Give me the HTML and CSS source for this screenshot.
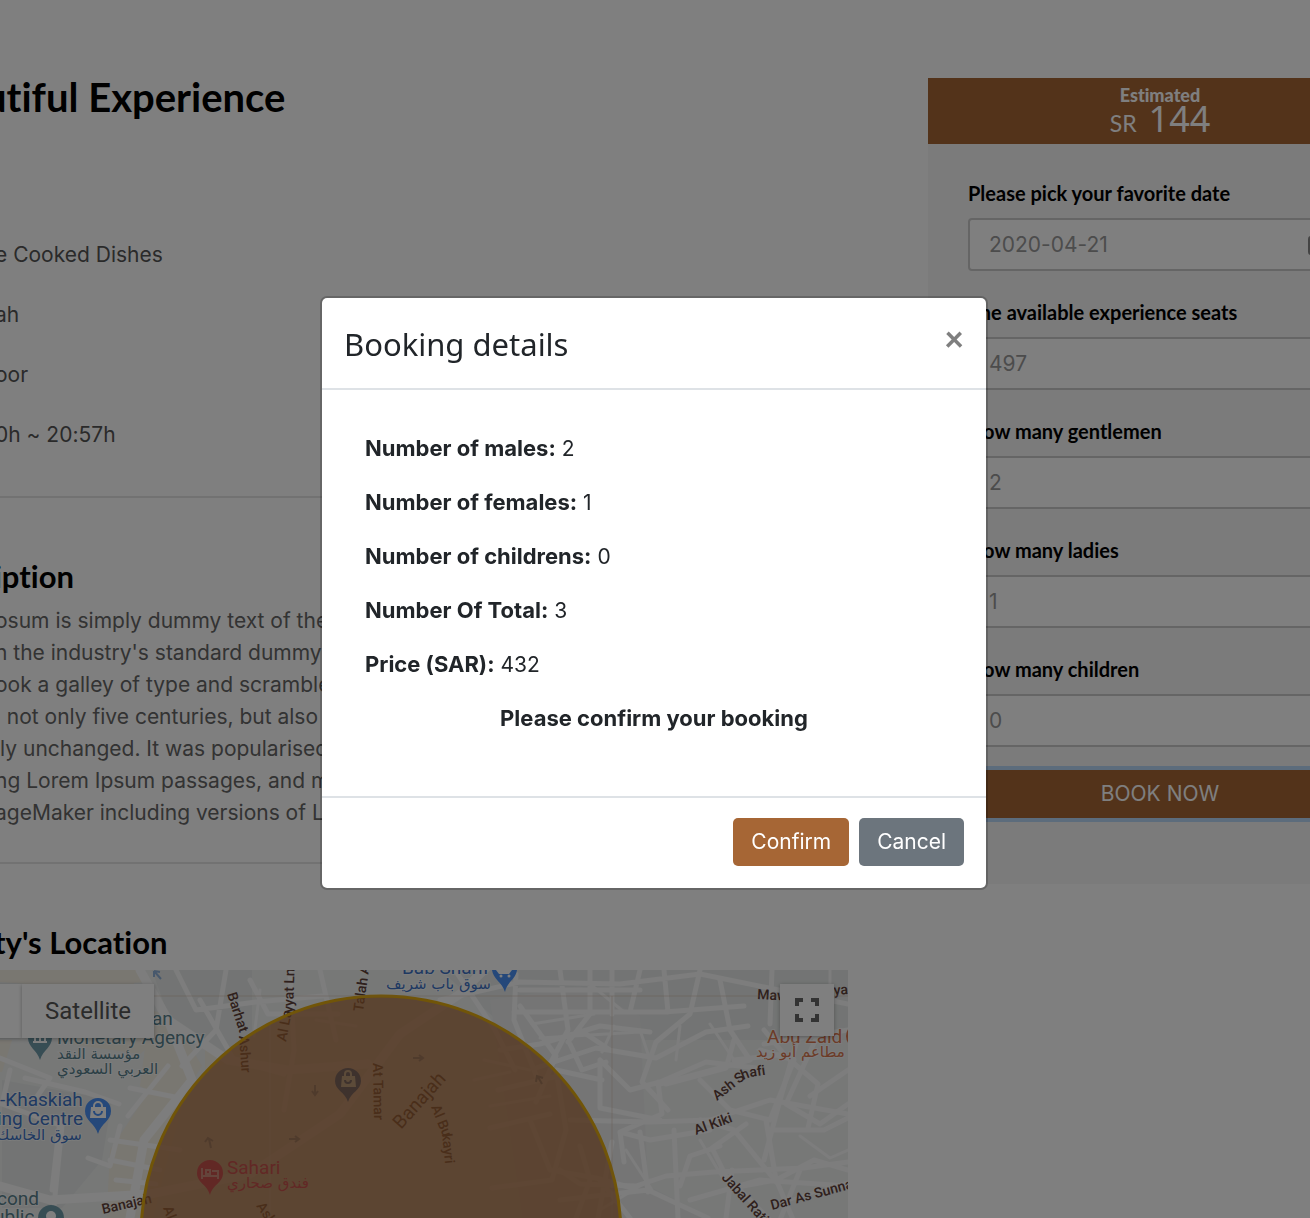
FILE: index.html
```html
<!DOCTYPE html>
<html lang="en">
<head>
<meta charset="utf-8">
<title>Booking details</title>
<link rel="stylesheet" href="styles.css">
</head>
<body>
<div class="page">
  <main class="experience">
    <h1 class="title">utiful Experience</h1>
    <ul class="facts">
      <li>e Cooked Dishes</li>
      <li>ah</li>
      <li>oor</li>
      <li>0h ~ 20:57h</li>
    </ul>
    <section class="section">
      <h2 class="heading">iption</h2>
      <p class="description">osum is simply dummy text of the<br>n the industry's standard dummy<br>ook a galley of type and scramble<br>&nbsp; not only five centuries, but also<br>lly unchanged. It was popularised<br>ng Lorem Ipsum passages, and m<br>ageMaker including versions of L</p>
    </section>
    <section class="section section-map">
      <h2 class="heading">ty's Location</h2>
      <div class="map">
        <svg class="map-canvas" width="848" height="500" viewBox="0 0 848 500" role="img" aria-label="Map">
          <rect width="848" height="500" fill="#eef0ef"/>
          <g fill="#f3eee2">
            <path d="M0 0h138l6 12-60 6-84-6zM60 18l66 4 44 36-30 26-70-10zM0 70h12L2 102H0zM150 40l22 6 30 50-26 40-36-20zM205 30l36 10 10 36-46 30zM110 180l40-60 40-10-20 70-20 80h-44zM60 2h74v12H70z"/>
          </g>
          <path fill="#e6e9e8" d="M152 0h100v60l-30 26-50-30zM2 110l110 20-10 60-40 48H2zM440 0h408v70H520z"/>
          <path fill="#eaebeb" d="M490 30l90-14 60 30 8 170 60 30-20 254H560z"/>
          <g class="roads" fill="none" stroke="#fafafa" stroke-width="5">
            <path stroke-width="9" d="M140 0l28 50 24 60-48 60-18 100M0 216l50 14 100-6 100-20 90-60 60-80 60-40 60-60 50-44M168 50l60 40 60 10 80-6"/>
            <path d="M10 100l-8 34 60 22-10 100M25 108l60 14 34 12M176 0l20 40 60-8 66-6M200 30l34 60 50 14M226 0l-10 60-34 36M290 0l4 80-10 60M320 0l16 70M250 10l18 34h70M0 88l50 20-14 20M60 150l-8 70M128 146l40-50M130 118l50 10M110 170l70 10M110 190l50 10M116 210l40 4M88 188l22 8 10-40"/>
            <path d="M455 0l40 60 20 40M440 30l80-18 100 2 80-10 148 30M520 36l36 50-20 46M516 4l-2 46 24 60M560 0l8 60-18 34M590 0v44l-22 28M612 0v44M640 0l-10 42M664 0l4 42M514 42h150l80-6M520 20h120M500 80l40-6 60-18 50 6M536 98l60-20 60 10 50-26 42-6M570 74l12 26 24-8M580 60l30 20"/>
            <path d="M700 0l-10 44-34 28-14 40 26 28M772 0l-2 54M720 10l10 50 20 30-90 24M800 60l-20 70-16 60M848 60l-84 14M764 60l20 24-50 6M734 70l-8 28-60 16"/>
            <path d="M600 90l30 30 30-8 46-20 50 6M600 90v48l60 12M658 112l4 32-42 18 4 30M550 144l-60 14M570 150l80 2 60-2 60-20 78 14M498 120l60-14M556 100l46 10M556 100l10 60-14 50-60 8M530 150l20 50 46 8 36 10M620 162l30 8 60-10M700 150l34 10 44 54 28 66"/>
            <path d="M760 80l34 10-24 60-40-10-30-30M790 90l28 24-10 44M820 60l-34 74 34 20 28-20M848 100l-38 26M766 150l10 60-44 8-20-40 34-24M770 160h54l24-12M720 176l-30 10-10 30M776 210l38-20 34 10M732 200l-6 48M580 176l10 34-14 38M612 172l-14 76M640 162l8 60M674 160l4 88M560 200l20 14 56 2 30-10 48-4 90-4 44-6M600 210l30 38M560 230l88-10 60 28M690 230l70-20 88 6M720 200l50 50M800 200l-20 50"/>
          </g>
          <g class="roads" fill="none" stroke="#fafafa" stroke-width="3">
            <path d="M532 54l62-10M540 68l100-6M484 90l46 10M474 110l36-8M490 136l60-10M590 14l34 28M614 56l-12 26M640 60l10 30M680 56l-4 34M710 54l24 36M830 0v40M800 16l10 40M600 240l50-30M626 180l26 40M700 170l24 40M800 166l30 22 18-8M790 230l58-18M150 14l-10 20M260 20l-6 46M316 50l40 6"/>
          </g>
          <g class="places">
            <g fill="#6f9aa8"><path d="M28 68a12 12 0 1 1 24 0c0 9-9 12-12 22-3-10-12-13-12-22z"/><path d="M38 248a13 13 0 0 1 26 0z"/></g>
            <path d="M33 72h14M35 65v7M40 65v7M45 65v7" stroke="#fff" stroke-width="2"/>
            <circle cx="51" cy="246" r="5" fill="#fff"/>
            <g fill="#4a90f4"><path d="M85 141a13 13 0 1 1 26 0c0 10-10 12-13 23-3-11-13-13-13-23z"/><path d="M492 0h25c-1 9-10 12-12 22-3-10-12-13-13-22z"/></g>
            <g fill="#fff"><path d="M91 137h15v11H90zM496 0h16l-3 4h-10z"/><circle cx="501" cy="6" r="1.500"/><circle cx="509" cy="6" r="1.500"/></g>
            <path d="M94 138v-2a4 4 0 0 1 8 0v2" fill="none" stroke="#fff" stroke-width="2"/>
            <path d="M94 141a4 4 0 0 0 8 0" fill="none" stroke="#4a90f4" stroke-width="2"/>
            <path d="M154 1l7 8M154 1l0 6M154 1l6 1" fill="none" stroke="#8fb0d8" stroke-width="2"/>
            <g fill="#58808c"><text x="152" y="55">an</text><text x="57" y="74">Monetary Agency</text><text class="arabic" x="57" y="89">مؤسسة النقد</text><text class="arabic" x="57" y="104">العربي السعودي</text><text x="-3" y="235">cond</text><text x="-6" y="253">ublic</text></g>
            <g fill="#3f73c4"><text x="0" y="136">-Khaskiah</text><text x="-3" y="155">ing Centre</text><text class="arabic" x="-3" y="170">سوق الخاسك</text><text x="402" y="4">Bab Sharif</text><text class="arabic" x="386" y="19">سوق باب شريف</text></g>
            <g fill="#d9764e"><text x="767" y="73">Abu Zaid</text><text class="arabic" x="756" y="87">مطاعم أبو زيد</text><circle cx="858" cy="66" r="12"/></g>
          </g>
          <g class="streets">
            <text transform="translate(227 24) rotate(72)">Barhat</text>
            <text transform="translate(239 66) rotate(86)">Ashur</text>
            <text transform="translate(286 72) rotate(-79)">Al La</text>
            <text transform="translate(293 43) rotate(-88)">yyat Ln</text>
            <text transform="translate(363 42) rotate(-82)">Talah A</text>
            <text transform="translate(373 93) rotate(89)">At Tamar</text>
            <text class="large" transform="translate(401 160) rotate(-48)">Banajah</text>
            <text transform="translate(431 137) rotate(68)">Al Bu</text>
            <text transform="translate(442 164) rotate(84)">kayri</text>
            <text transform="translate(103 244) rotate(-13)">Banajah</text>
            <text transform="translate(256 236) rotate(56)">Ash</text>
            <text transform="translate(163 238) rotate(70)">Al</text>
            <text transform="translate(757 29) rotate(3)">Maw</text>
            <text transform="translate(834 25) rotate(-4)">yad</text>
            <text transform="translate(717 131) rotate(-38)">Ash S</text>
            <text transform="translate(743 110) rotate(-22)">h</text>
            <text transform="translate(750 107) rotate(-8)">afi</text>
            <text transform="translate(696 165) rotate(-20)">Al Kiki</text>
            <text transform="translate(721 208) rotate(48)">Jabal Ratil</text>
            <text transform="translate(772 240) rotate(-15)">Dar As Sunnah</text>
          </g>
          <circle cx="381" cy="266" r="240" fill="#a66635" fill-opacity=".74" stroke="#e3ab10" stroke-width="3"/>
          <path fill="#7d655b" d="M335 111a13 13 0 1 1 26 0c0 9-10 11-13 21-3-10-13-12-13-21z"/>
          <path fill="#b99672" d="M342 106h13l1 11h-15zM344 106v-2a4 4 0 0 1 8 0v2h-2v-2a2 2 0 0 0-4 0v2z"/>
          <path d="M345 110a3 3 0 0 0 6 0" fill="none" stroke="#7d655b" stroke-width="2"/>
          <g fill="none" stroke="#9f7658" stroke-width="2">
            <path d="M413 88h9M419 85l4 3-4 3M315 115v9M312 121l3 4 3-4M289 169h9M295 166l4 3-4 3M211 178l-2-9M205 172l3-4 5 3M542 114l-4-7M536 112l1-6 6 2"/>
          </g>
          <path fill="none" stroke="#c49b77" stroke-opacity=".3" d="M270 55v445M0 26h848M612 26v474"/>
          <path fill="#c4514b" d="M197 203a13 13 0 1 1 26 0c0 10-10 11-13 22-3-11-13-12-13-22z"/>
          <path fill="none" stroke="#c88877" stroke-width="2" d="M202 198v11M202 206h16v3M206 200h4v4h-4zM212 201h6v5"/>
          <g class="hotel"><text x="227" y="204">Sahari</text><text class="arabic" x="227" y="218">فندق صحاري</text></g>
        </svg>
        <div class="map-types"><button type="button" class="map-button map-type">Map</button><button type="button" class="map-button map-type">Satellite</button></div>
        <button type="button" class="map-button fullscreen" aria-label="Fullscreen">
          <svg width="24" height="24" viewBox="0 0 24 24" fill="none" stroke="#666" stroke-width="4"><path d="M2 8V2h6M16 2h6v6M22 16v6h-6M8 22H2v-6"/></svg>
        </button>
      </div>
    </section>
  </main>
  <aside class="booking">
    <header class="estimate">
      <strong class="estimate-label">Estimated</strong>
      <div class="price"><span class="currency">SR</span><span>144</span></div>
    </header>
    <form class="form">
      <label class="label" for="date">Please pick your favorite date</label>
      <div class="date-field">
        <input class="input" id="date" type="text" value="2020-04-21">
        <svg class="calendar" width="20" height="20" viewBox="0 0 20 20" fill="none" stroke="#888" stroke-width="2"><rect x="1" y="2" width="18" height="17" rx="2"/><path d="M1 7h18M6 0v4M14 0v4"/></svg>
      </div>
      <label class="label" for="seats">The available experience seats</label>
      <input class="input" id="seats" type="text" value="497">
      <label class="label" for="men">How many gentlemen</label>
      <input class="input" id="men" type="text" value="2">
      <label class="label" for="ladies">How many ladies</label>
      <input class="input" id="ladies" type="text" value="1">
      <label class="label" for="children">How many children</label>
      <input class="input" id="children" type="text" value="0">
      <button class="book" type="button">BOOK NOW</button>
    </form>
  </aside>
</div>
<div class="backdrop">
  <div class="modal" role="dialog" aria-modal="true" aria-labelledby="modal-title">
    <header class="modal-header">
      <h2 class="modal-title" id="modal-title">Booking details</h2>
      <button class="close" type="button" aria-label="Close">×</button>
    </header>
    <div class="modal-body">
      <p><strong>Number of males:</strong> 2</p>
      <p><strong>Number of females:</strong> 1</p>
      <p><strong>Number of childrens:</strong> 0</p>
      <p><strong>Number Of Total:</strong> 3</p>
      <p><strong>Price (SAR):</strong> 432</p>
      <p class="confirm-note"><strong>Please confirm your booking</strong></p>
    </div>
    <footer class="modal-footer">
      <button class="btn btn-primary" type="button">Confirm</button>
      <button class="btn btn-secondary" type="button">Cancel</button>
    </footer>
  </div>
</div>
</body>
</html>
```
FILE: styles.css
```css
* { box-sizing: border-box; }
body {
  margin: 0;
  height: 100vh;
  overflow: hidden;
  background: #fff;
  color: #212529;
  font-family: Inter, sans-serif;
  font-size: 21px;
  font-variant-ligatures: none;
  line-height: 32px;
}
h1, h2, p, ul { margin: 0; padding: 0; }
button, input { font: inherit; }

.page {
  display: grid;
  grid-template-columns: minmax(0, 1fr) 464px;
  column-gap: 80px;
  align-items: start;
  margin-right: -82px;
  padding-top: 78px;
}
.title, .heading { color: #000; font-family: Lato, sans-serif; font-weight: 700; }
.title { margin-left: -16px; font-size: 40px; line-height: 38px; }
.facts {
  list-style: none;
  margin-top: 109px;
  padding-bottom: 31px;
  border-bottom: 2px solid #e5e5e5;
  color: #555;
  line-height: 60px;
  text-indent: -5px;
}
.section { padding: 61px 0 33px; border-bottom: 2px solid #e5e5e5; }
.section-map { padding: 61px 0 0; border: 0; }
.heading { margin-left: -6px; font-size: 31px; line-height: 34px; }
.description { margin: 12px 0 0 -5px; color: #666; white-space: nowrap; }

.map { position: relative; margin-top: 11px; overflow: hidden; }
.map-canvas { display: block; font-family: Roboto, sans-serif; }
.roads { stroke-linejoin: round; stroke-linecap: round; }
.places text { font-size: 19px; stroke: #fff; stroke-width: 2px; stroke-opacity: .6; paint-order: stroke; }
.places .arabic, .hotel .arabic { font-family: "DejaVu Sans", sans-serif; font-size: 15px; }
.streets { fill: #5e4038; font-size: 14px; font-weight: 500; }
.streets .large { font-size: 19px; font-weight: 400; }
.hotel { fill: #c4514b; font-size: 19px; }
.map-button {
  border: 0;
  background: #fff;
  box-shadow: 0 1px 4px rgba(0, 0, 0, .3);
  color: #565656;
  font-family: Roboto, sans-serif;
  font-size: 24px;
}
.map-types { position: absolute; top: 14px; left: -78px; display: flex; }
.map-type { height: 54px; padding: 0 23px; }
.map-type:first-child { width: 100px; }
.fullscreen {
  position: absolute;
  top: 14px;
  right: 14px;
  display: grid;
  place-items: center;
  width: 54px;
  height: 52px;
  padding: 0;
}

.booking { background: #f7f7f7; }
.estimate { height: 66px; padding-top: 7px; background: #a66635; color: #fff; text-align: center; }
.estimate-label {
  display: block;
  font-family: Lato, sans-serif;
  font-size: 18px;
  font-weight: 900;
  line-height: 20px;
}
.price {
  display: flex;
  justify-content: center;
  align-items: baseline;
  gap: 12px;
  font: 36px/28px "Noto Sans", sans-serif;
}
.currency { font-family: Lato, sans-serif; font-size: 23px; }
.form { display: flex; flex-direction: column; padding: 32px 40px 66px; }
.label { margin-bottom: 8px; color: #000; font: 700 20px/34px Lato, sans-serif; }
.input {
  width: 100%;
  height: 53px;
  margin-bottom: 24px;
  padding: 0 19px;
  border: 2px solid #cacaca;
  border-radius: 4px;
  background: #fff;
  color: #999;
}
.date-field { position: relative; }
.calendar { position: absolute; top: 17px; right: 24px; }
.book {
  height: 48px;
  margin-top: -1px;
  padding: 0;
  border: 0;
  border-radius: 4px;
  background: #a66635;
  box-shadow: 0 0 0 4px rgba(0, 123, 255, .25);
  color: #fff;
}

.backdrop {
  position: fixed;
  inset: 0;
  display: flex;
  justify-content: center;
  align-items: flex-start;
  padding: 296px 22px 20px 20px;
  background: rgba(0, 0, 0, .5);
}
.modal {
  width: 100%;
  max-width: 668px;
  border: 2px solid rgba(0, 0, 0, .2);
  border-radius: 7px;
  background: #fff;
  background-clip: padding-box;
}
.modal-header {
  display: flex;
  justify-content: space-between;
  align-items: flex-start;
  padding: 22px 22px 20px;
  border-bottom: 2px solid #dee2e6;
}
.modal-title { font: 400 31px/48px "Noto Sans", sans-serif; }
.close {
  padding: 0;
  border: 0;
  background: none;
  color: #7f7f7f;
  font: 900 34px/36px Lato, sans-serif;
}
.modal-body { padding: 42px 43px 40px; }
.modal-body p { margin-bottom: 21px; }
.modal-body strong { font-size: 22px; font-weight: 700; }
.modal-body .confirm-note { text-align: center; }
.modal-footer {
  display: flex;
  justify-content: flex-end;
  gap: 10px;
  padding: 20px 22px 22px;
  border-top: 2px solid #dee2e6;
}
.btn { height: 48px; padding: 0 18px; border: 0; border-radius: 5px; color: #fff; }
.btn-primary { background: #a66635; }
.btn-secondary { background: #6c757d; }
```
